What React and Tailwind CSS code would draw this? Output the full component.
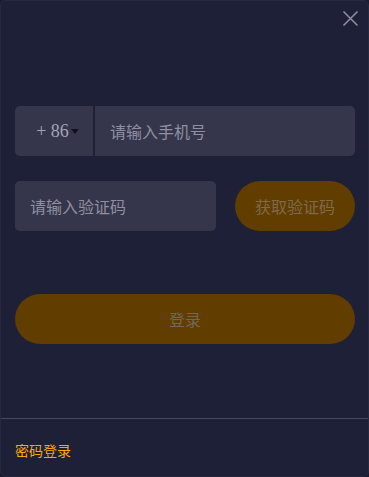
import { useState } from 'react'

const cjk = { fontFamily: '"Noto Sans CJK SC", "Noto Sans", sans-serif' }

export default function App() {
  const [phone, setPhone] = useState('')
  const [code, setCode] = useState('')

  return (
    <div className="h-[477px] w-[369px] bg-[#1b1c30]" style={cjk}>
      <div className="relative flex h-full flex-col overflow-hidden rounded-[6px] border border-[#272940] bg-[#1e2037]">
        <button className="absolute right-[9px] top-[8px] flex h-[18px] w-[18px] items-center justify-center text-[#8b8c9c]">
          <svg width="17" height="17" viewBox="0 0 17 17" fill="none" stroke="currentColor" strokeWidth="1.6">
            <path d="M1.5 1.5l14 14M15.5 1.5l-14 14" />
          </svg>
        </button>

        <div className="flex flex-col pl-[14px] pr-[13px] pt-[105px]">
          <div className="flex h-[50px] items-stretch overflow-hidden rounded-[5px] bg-[#35364b]">
            <button className="flex w-[78px] items-center justify-center gap-[2px] pl-[7px] text-[18px] text-[#a2a3b6]">
              <span style={{ fontFamily: '"Liberation Serif", serif' }}>+ 86</span>
              <svg width="8" height="5" viewBox="0 0 8 5">
                <path d="M0 0h8L4 5z" fill="#0f1020" />
              </svg>
            </button>
            <div className="w-[2px] bg-[#1e2037]" />
            <input
              className="min-w-0 flex-1 bg-transparent pl-[15px] text-[16px] text-white outline-none placeholder:text-[#8f90a0]"
              placeholder="请输入手机号"
              value={phone}
              onChange={(e) => setPhone(e.target.value)}
            />
          </div>

          <div className="mt-[25px] flex items-center gap-[19px]">
            <input
              className="h-[50px] w-[201px] rounded-[5px] bg-[#35364b] px-[15px] text-[16px] text-white outline-none placeholder:text-[#8f90a0]"
              placeholder="请输入验证码"
              value={code}
              onChange={(e) => setCode(e.target.value)}
            />
            <button className="h-[50px] flex-1 rounded-full bg-[#613d00] text-[16px] text-[#7d6a4a]">
              获取验证码
            </button>
          </div>

          <button className="mt-[63px] h-[50px] w-full rounded-full bg-[#613d00] text-[16px] text-[#6f675a]">
            登录
          </button>
        </div>

        <div className="flex-1" />

        <div className="h-[58px] border-t border-[#45475d] px-[14px] pt-[18px]">
          <button className="text-[14px] leading-[20px] text-[#ffa800]">密码登录</button>
        </div>
      </div>
    </div>
  )
}
